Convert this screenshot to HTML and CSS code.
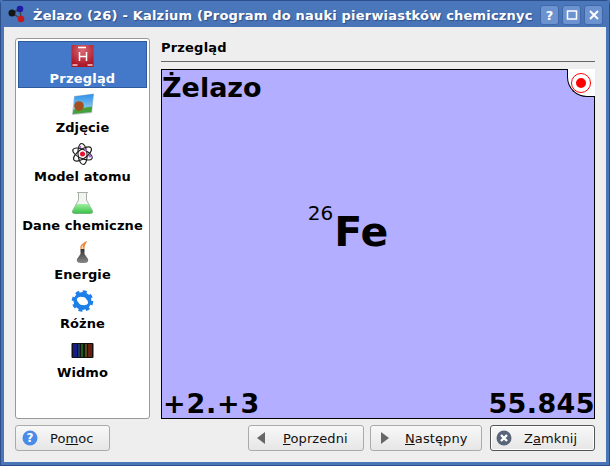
FILE: index.html
```html
<!DOCTYPE html>
<html lang="pl">
<head>
    <meta charset="UTF-8">
    <title>Żelazo (26) - Kalzium</title>
    <link rel="stylesheet" href="styles.css">
</head>
<body>
    <div class="window">
        <div class="titlebar">
            <svg class="app-icon" width="22" height="22" viewBox="0 0 22 22">
                <path d="M5 9L13 5M5 9L14 15M13 5L14 15" stroke="#444" stroke-width="1.5" fill="none"/>
                <circle cx="13" cy="5" r="3.300" fill="#1c1ca8"/>
                <circle cx="14" cy="15" r="3.300" fill="#c41820"/>
                <circle cx="5" cy="9" r="3.500" fill="#161616"/>
            </svg>
            <div class="title">Żelazo (26) - Kalzium (Program do nauki pierwiastków chemicznyc</div>
            <div class="tb-buttons">
                <div class="tb-btn">?</div>
                <div class="tb-btn"><svg width="12" height="12" viewBox="0 0 12 12"><rect x="1.500" y="2" width="9" height="8" fill="none" stroke="#fff" stroke-width="1.500"/></svg></div>
                <div class="tb-btn"><svg width="12" height="12" viewBox="0 0 12 12"><path d="M2 2L10 10M10 2L2 10" stroke="#fff" stroke-width="2"/></svg></div>
            </div>
        </div>
        <div class="content">
            <div class="main">
                <div class="sidebar">
                    <div class="item selected">
                        <svg width="24" height="24" viewBox="0 0 24 24">
                            <defs>
                                <radialGradient id="hGlow" cx="0.5" cy="0.25" r="0.7">
                                    <stop offset="0" stop-color="#d86a76"/>
                                    <stop offset="1" stop-color="#ac1626"/>
                                </radialGradient>
                            </defs>
                            <rect x="0.500" y="0" width="22" height="22" fill="url(#hGlow)"/>
                            <path d="M8.500 7V16M15.500 7V16M8.500 11.500H15.500M7 2.500H15" stroke="#fff" stroke-width="1.500" fill="none"/>
                            <path d="M1.500 20H6.500M16.500 20H21.500" stroke="#f4d0d0" stroke-width="1.500"/>
                        </svg>
                        <span>Przegląd</span>
                    </div>
                    <div class="item">
                        <svg width="24" height="24" viewBox="0 0 24 24">
                            <defs>
                                <linearGradient id="sky" x1="0" y1="0" x2="0" y2="1">
                                    <stop offset="0" stop-color="#2f8fe8"/>
                                    <stop offset="1" stop-color="#90d0f4"/>
                                </linearGradient>
                            </defs>
                            <path d="M3 3L23 0.500L21 20L1 22Z" fill="#b8c4c8"/>
                            <path d="M3.500 3.500L22.500 1L21 15L2.500 17Z" fill="url(#sky)"/>
                            <path d="M2.500 16.500L21 13.500L20.500 19L1.800 21Z" fill="#46a03a"/>
                            <circle cx="8" cy="13" r="4.800" fill="#a4501c"/>
                        </svg>
                        <span>Zdjęcie</span>
                    </div>
                    <div class="item">
                        <svg width="24" height="24" viewBox="0 0 24 24">
                            <g fill="none" stroke="#1a1a1a" stroke-width="1.100">
                                <ellipse cx="11.500" cy="12" rx="10.500" ry="4.500" transform="rotate(25 11.500 12)"/>
                                <ellipse cx="11.500" cy="12" rx="10.500" ry="4.500" transform="rotate(-35 11.500 12)"/>
                                <ellipse cx="11.500" cy="12" rx="10.500" ry="4.500" transform="rotate(85 11.500 12)"/>
                            </g>
                            <circle cx="11.500" cy="12" r="2.500" fill="#e81030"/>
                            <circle cx="19" cy="14" r="1.500" fill="#b060d0"/>
                            <circle cx="9" cy="5" r="1.300" fill="#b060d0"/>
                            <circle cx="15" cy="8" r="1.200" fill="#b060d0"/>
                        </svg>
                        <span>Model atomu</span>
                    </div>
                    <div class="item">
                        <svg width="24" height="24" viewBox="0 0 24 24">
                            <defs>
                                <linearGradient id="liquid" x1="0" y1="0" x2="0" y2="1">
                                    <stop offset="0" stop-color="#9cf09c"/>
                                    <stop offset="1" stop-color="#38c048"/>
                                </linearGradient>
                            </defs>
                            <path d="M6 1.500H17M7.500 1.500V9L1.500 20Q1 22.500 3.500 22.500H19.500Q22 22.500 21.500 20L15.500 9V1.500" fill="#f2f4f2" stroke="#a8b0a8" stroke-width="1"/>
                            <path d="M5.500 13H17.500L21.500 20Q22 22.500 19.500 22.500H3.500Q1 22.500 1.500 20Z" fill="url(#liquid)"/>
                        </svg>
                        <span>Dane chemiczne</span>
                    </div>
                    <div class="item">
                        <svg width="24" height="24" viewBox="0 0 24 24">
                            <defs>
                                <linearGradient id="burner" x1="0" y1="0" x2="0" y2="1">
                                    <stop offset="0" stop-color="#333"/>
                                    <stop offset="1" stop-color="#888"/>
                                </linearGradient>
                            </defs>
                            <path d="M9.500 23Q5 23 6 19L9.500 14V9H13.500V14L17 19Q18 23 13.500 23Z" fill="url(#burner)"/>
                            <path d="M9.500 9Q8.500 5 12 3.500Q13 1.500 16.500 1Q13.500 4 13.500 9Z" fill="#f08838"/>
                            <path d="M10.500 9Q10 6 12 5Q12 7 12.500 9Z" fill="#f8d8b0"/>
                        </svg>
                        <span>Energie</span>
                    </div>
                    <div class="item">
                        <svg width="24" height="24" viewBox="0 0 24 24">
                            <circle cx="11.500" cy="12" r="6.500" fill="none" stroke="#1f7fe8" stroke-width="5"/>
                            <circle cx="11.500" cy="12" r="9.500" fill="none" stroke="#1f7fe8" stroke-width="2.500" stroke-dasharray="4 3.460"/>
                            <ellipse cx="11.500" cy="12" rx="6" ry="3.600" fill="#fff" transform="rotate(25 11.500 12)"/>
                        </svg>
                        <span>Różne</span>
                    </div>
                    <div class="item">
                        <svg width="24" height="18" viewBox="0 0 24 18">
                            <rect x="0.500" y="2" width="22" height="15" rx="1" fill="#111"/>
                            <rect x="2" y="3" width="4" height="13" fill="#1a1a8a"/>
                            <rect x="7" y="3" width="2" height="13" fill="#123a5a"/>
                            <rect x="10" y="3" width="2" height="13" fill="#1e5a1e"/>
                            <rect x="14" y="3" width="2" height="13" fill="#4e4e12"/>
                            <rect x="17" y="3" width="4" height="13" fill="#6a1e12"/>
                        </svg>
                        <span>Widmo</span>
                    </div>
                </div>
                <div class="page">
                    <div class="page-title">Przegląd</div>
                    <div class="card">
                        <div class="corner"><div class="dot"></div></div>
                        <div class="el-name">Żelazo</div>
                        <div class="el-symbol"><sup>26</sup>Fe</div>
                        <div class="el-bottom">
                            <span class="el-ox">+2.+3</span>
                            <span>55.845</span>
                        </div>
                    </div>
                </div>
            </div>
            <div class="buttons">
                <div class="btn btn-help">
                    <svg width="16" height="16" viewBox="0 0 16 16"><circle cx="8" cy="8" r="7.500" fill="#4a8ae8"/><text x="8" y="12" class="q">?</text></svg>
                    <span class="lbl">Po<u>m</u>oc</span>
                </div>
                <div class="spacer"></div>
                <div class="btn btn-prev">
                    <svg width="12" height="14" viewBox="0 0 12 14"><path d="M10 1V13L2 7Z" fill="#666"/></svg>
                    <span class="lbl"><u>P</u>oprzedni</span>
                </div>
                <div class="btn btn-next">
                    <svg width="12" height="14" viewBox="0 0 12 14"><path d="M4 1V13L12 7Z" fill="#666"/></svg>
                    <span class="lbl"><u>N</u>astępny</span>
                </div>
                <div class="btn btn-close">
                    <svg width="16" height="16" viewBox="0 0 16 16"><circle cx="8" cy="8" r="7.500" fill="#5a6478"/><path d="M5 5L11 11M11 5L5 11" stroke="#fff" stroke-width="2.400"/></svg>
                    <span class="lbl">Z<u>a</u>mknij</span>
                </div>
            </div>
        </div>
    </div>
</body>
</html>
```

FILE: styles.css
```css
html, body {
    margin: 0;
    padding: 0;
}

body {
    width: 610px;
    height: 466px;
    overflow: hidden;
    font-family: "DejaVu Sans", sans-serif;
    background-color: #4a76b8;
}

.window {
    width: 610px;
    height: 466px;
    box-sizing: border-box;
    display: flex;
    flex-direction: column;
    border: 1px solid #2c4f8c;
    border-radius: 4px 4px 0 0;
    background-color: #4a76b8;
}

.titlebar {
    height: 26px;
    box-sizing: border-box;
    display: flex;
    align-items: center;
    padding: 2px 0 0 6px;
    background: linear-gradient(#4b78bc, #4873b6);
}

.app-icon {
    flex: none;
    margin-right: 4px;
}

.title {
    flex: 1;
    min-width: 0;
    white-space: nowrap;
    color: #fff;
    font-weight: bold;
    font-size: 13px;
    letter-spacing: 0.2px;
    text-shadow: 1px 1px 1px #2c4f8c;
}

.tb-buttons {
    display: flex;
    gap: 3px;
    padding: 0 6px 0 8px;
}

.tb-btn {
    width: 19px;
    height: 20px;
    display: flex;
    align-items: center;
    justify-content: center;
    box-sizing: border-box;
    border: 1px solid #4068a8;
    border-radius: 3px;
    background-color: #6c93d0;
    color: #fff;
    font-weight: bold;
    font-size: 13px;
}

.content {
    flex: 1;
    min-height: 0;
    display: flex;
    flex-direction: column;
    margin: 0 3px 3px 3px;
    padding: 11px 11px 0 11px;
    background-color: #eeeeee;
}

.main {
    height: 381px;
    display: flex;
    gap: 11px;
}

.sidebar {
    width: 135px;
    box-sizing: border-box;
    padding: 2px;
    background-color: #fff;
    border: 1px solid #999;
    border-radius: 3px;
}

.item {
    height: 49px;
    display: flex;
    flex-direction: column;
    align-items: center;
    font-size: 13px;
    font-weight: bold;
    letter-spacing: 0.1px;
    color: #000;
}

.item svg {
    height: 24px;
    margin-top: 3px;
    flex: none;
}

.item span {
    margin-top: 3px;
    line-height: 16px;
    white-space: nowrap;
}

.item.selected {
    height: 47px;
    margin-bottom: 2px;
    box-sizing: border-box;
    background-color: #4478c8;
    border: 1px solid #2f5a9c;
    color: #fff;
    letter-spacing: 0.2px;
}

.item.selected span {
    margin-top: 2px;
}

.page {
    flex: 1;
    min-width: 0;
    display: flex;
    flex-direction: column;
}

.page-title {
    height: 24px;
    box-sizing: border-box;
    font-size: 13px;
    font-weight: bold;
    letter-spacing: 0.2px;
    line-height: 19px;
    color: #000;
    border-bottom: 1px solid #666;
    margin-bottom: 7px;
}

.card {
    position: relative;
    flex: 1;
    box-sizing: border-box;
    display: flex;
    flex-direction: column;
    justify-content: space-between;
    border: 1px solid #000;
    background-color: #b3aeff;
    color: #000;
    font-weight: bold;
}

.corner {
    position: absolute;
    top: -1px;
    right: -1px;
    width: 28px;
    height: 28px;
    box-sizing: border-box;
    display: flex;
    align-items: center;
    justify-content: center;
    padding-right: 1px;
    background-color: #fff;
    border-left: 1px solid #000;
    border-bottom: 1px solid #000;
    border-bottom-left-radius: 20px;
}

.dot {
    flex: none;
    width: 10px;
    height: 10px;
    border-radius: 50%;
    background-color: #f00;
    border: 4px solid #fff;
    outline: 1px solid #f00;
}

.el-name {
    font-size: 27px;
    line-height: 33px;
    margin-top: 1px;
}

.el-symbol {
    font-size: 41px;
    line-height: 48px;
    text-align: center;
    padding-right: 60px;
    margin-bottom: 30px;
}

.el-symbol sup {
    font-size: 20px;
    font-weight: normal;
    vertical-align: 26px;
    line-height: 0;
    margin-right: 1px;
}

.el-bottom {
    display: flex;
    justify-content: space-between;
    font-size: 27px;
    letter-spacing: 0.4px;
    line-height: 29px;
    padding-left: 1px;
    margin-right: -1px;
}

.el-ox {
    letter-spacing: 0.8px;
}

.buttons {
    display: flex;
    align-items: center;
    gap: 6px;
    margin-top: 6px;
}

.spacer {
    flex: 1;
}

.btn {
    height: 26px;
    box-sizing: border-box;
    display: flex;
    align-items: center;
    padding-left: 6px;
    border: 1px solid #aaa;
    border-radius: 3px;
    background: linear-gradient(#f8f8f8, #e6e6e6);
    font-size: 13px;
    letter-spacing: 0.1px;
    color: #111;
}

.btn .lbl {
    margin-left: 12px;
}

.btn-help {
    width: 95px;
}

.btn-prev {
    width: 116px;
}

.btn-prev .lbl {
    margin-left: 16px;
}

.btn-next {
    width: 112px;
}

.btn-next .lbl {
    margin-left: 16px;
}

.btn-close {
    width: 105px;
    margin-left: 2px;
    padding-left: 5px;
    border-color: #555;
    box-shadow: inset 0 0 0 1px #fff;
}

.q {
    font-size: 12px;
    font-weight: bold;
    fill: #fff;
    text-anchor: middle;
}
```
